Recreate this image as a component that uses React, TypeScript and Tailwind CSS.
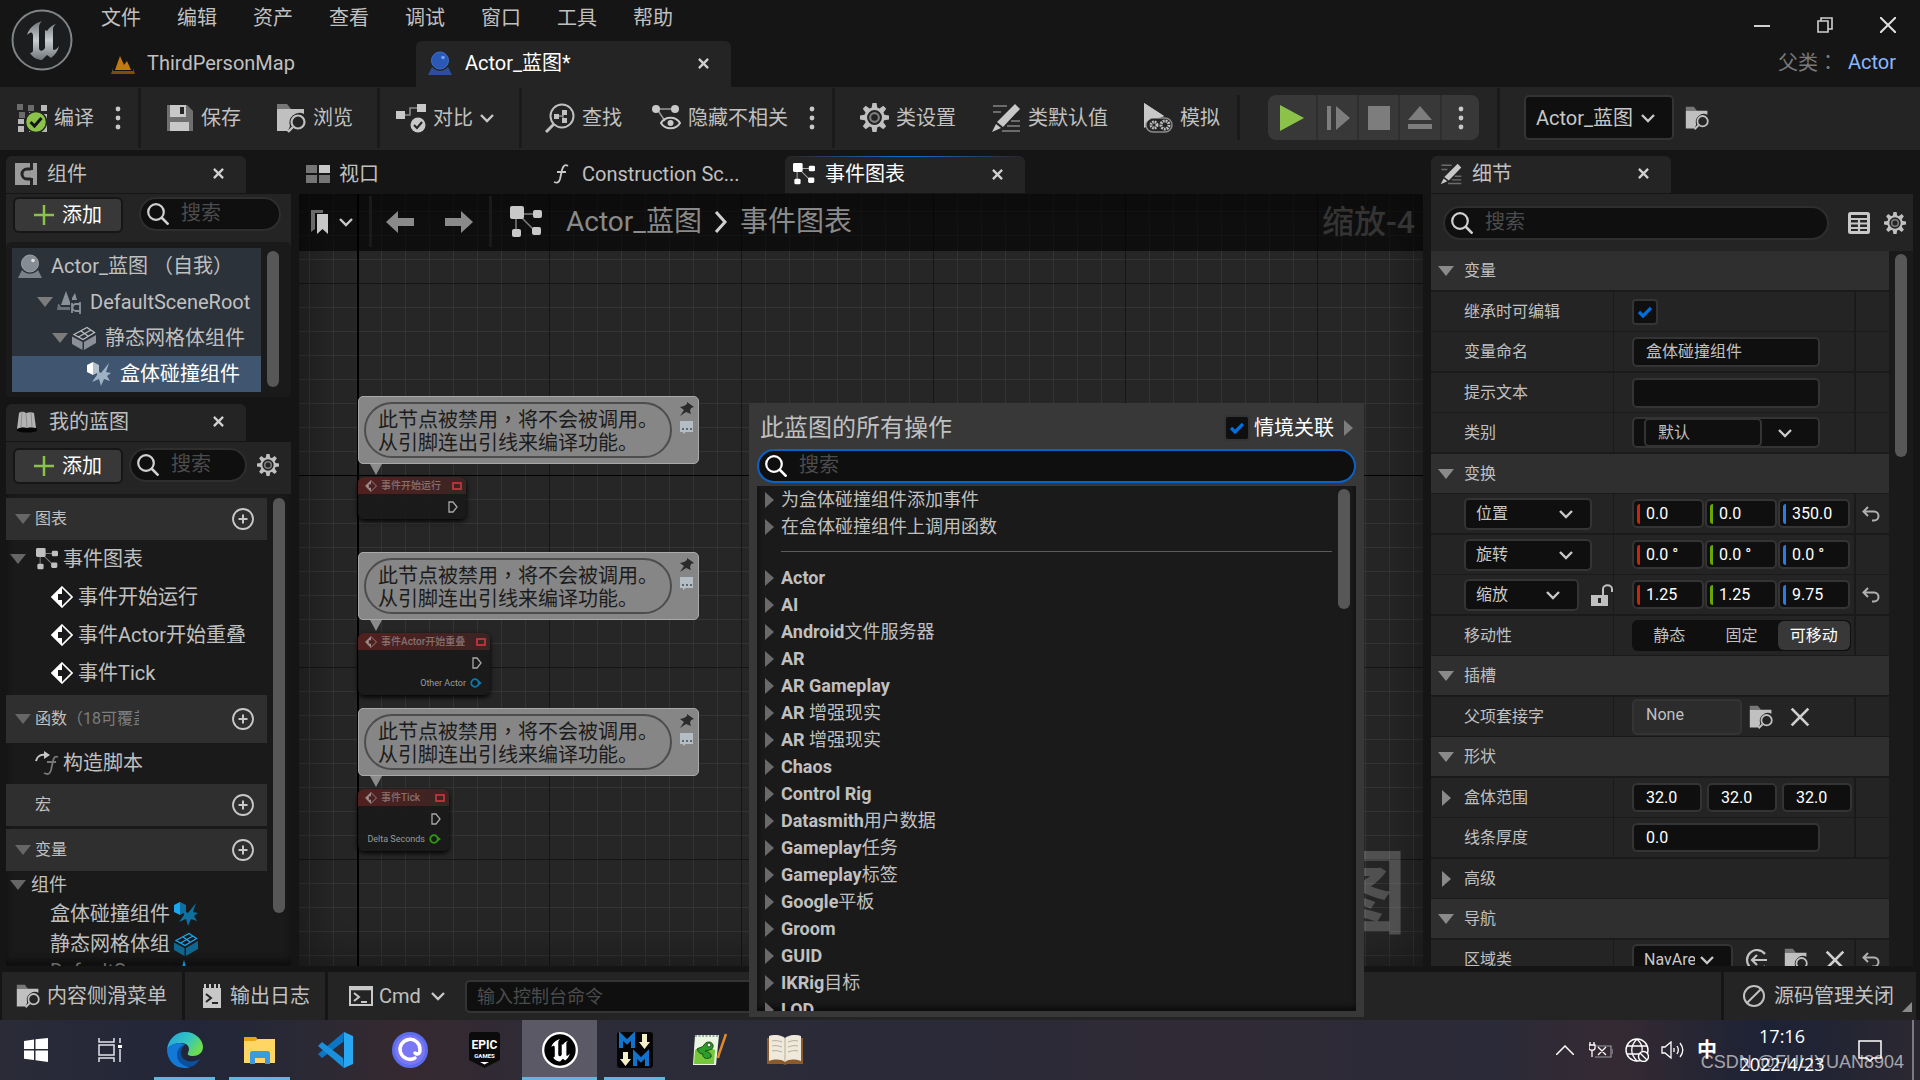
import { useState } from "react";
import type { ReactNode } from "react";
import { Ban } from "lucide-react";
import clsx from "clsx";

/* ---------- icons ---------- */

type IconProps = { className?: string };

const Svg = ({
  className = "size-6",
  box = "0 0 24 24",
  children,
}: {
  className?: string;
  box?: string;
  children: ReactNode;
}) => (
  <svg className={clsx("shrink-0", className)} viewBox={box} fill="none" aria-hidden="true">
    {children}
  </svg>
);

const Triangle = ({ open, className = "text-[#7c7c7c]" }: { open?: boolean; className?: string }) => (
  <Svg className={clsx("size-4", className)} box="0 0 16 16">
    <path d={open ? "M0 3h16L8 13z" : "M4 0v16l9-8z"} fill="currentColor" />
  </Svg>
);

const Chevron = ({ className }: IconProps) => (
  <Svg className={clsx("h-2.5 w-3.5", className)} box="0 0 14 10">
    <path d="m1 2 6 6 6-6" stroke="#c8c8c8" strokeWidth="2.4" />
  </Svg>
);

const Cross = ({ className = "size-[11px]", width = 2.5 }: { className?: string; width?: number }) => (
  <Svg className={className} box="0 0 12 12">
    <path d="m1 1 10 10M11 1 1 11" stroke="#d0d0d0" strokeWidth={width} />
  </Svg>
);

const SearchIcon = () => (
  <Svg className="size-[22px]" box="0 0 22 22">
    <circle cx="9" cy="9" r="7.800" stroke="currentColor" strokeWidth="2.200" />
    <path d="m14.500 14.500 7 7" stroke="currentColor" strokeWidth="2.600" />
  </Svg>
);

const Dots = () => (
  <Svg className="h-6 w-2" box="0 0 8 24">
    <circle cx="4" cy="3" r="2.4" fill="#c8c8c8" />
    <circle cx="4" cy="12" r="2.4" fill="#c8c8c8" />
    <circle cx="4" cy="21" r="2.4" fill="#c8c8c8" />
  </Svg>
);

const UnrealU = ({ fill }: { fill: string }) => (
  <path
    d="M31 12c-7 2-13 7-15 14 2-2 4-3 5-2s1 2 1 4v13c0 2-1 3-3 3 3 5 8 7 12 7l5-5 4 3c4-3 7-7 8-12-2 3-4 4-5 4-1 0-1-1-1-2V20c0-2 1-3 3-5-4 1-7 4-9 7l-2-1v18c-1 2-4 4-5 2-1 0-1-2-1-3V18c0-2 1-4 3-6z"
    fill={fill}
  />
);

const UnrealLogo = () => (
  <Svg className="size-[62px]" box="0 0 62 62">
    <defs>
      <linearGradient id="metal" x1="0" y1="0" x2="0" y2="1">
        <stop offset="0" stopColor="#6d7276" />
        <stop offset="0.5" stopColor="#c9cdd0" />
        <stop offset="1" stopColor="#6e7478" />
      </linearGradient>
    </defs>
    <circle cx="31" cy="31" r="29.5" fill="#1b1d1e" stroke="#7f8486" strokeWidth="2" />
    <UnrealU fill="url(#metal)" />
  </Svg>
);

const LevelIcon = () => (
  <Svg className="size-6">
    <path d="M4 19 9 5l4 9 3-4 4 9z" fill="#c47a0b" />
    <path d="M2 17 0 23h24l-2-6v3H2z" fill="#7c4d0b" />
  </Svg>
);

const ActorIcon = ({ blue }: { blue?: boolean }) => (
  <Svg className="size-6">
    <path d="M4 16 0 24h24l-4-8c-4 5-12 5-16 0z" fill={blue ? "#2b4f9b" : "#7b8188"} />
    <circle cx="12" cy="9.5" r="8.5" fill={blue ? "#2c58b5" : "#868c93"} stroke={blue ? "#3f6fd0" : "#9aa0a6"} />
    <circle cx="15" cy="6.5" r="1.8" fill={blue ? "#6ea3ff" : "#dfe2e5"} />
  </Svg>
);

const CompileIcon = () => (
  <Svg className="size-[30px]" box="0 0 30 30">
    <path d="M0 1h6v6H0zM11 2h6v6h-6zM2 9h6v6H2z" fill="#6c6c6c" />
    <path d="M24 2h6v6h-6zM1 16h6v5H1zM1 23h6v6H1zM12 9h5v5h-5zM24 11h6v18H12v-8z" fill="#b8b8b8" />
    <circle cx="19" cy="19" r="10.5" fill="#8bc34a" stroke="#242424" strokeWidth="1.5" />
    <path d="m13.500 19 4 4 7-8" stroke="#151515" strokeWidth="3" />
  </Svg>
);

const SaveIcon = () => (
  <Svg className="size-7" box="0 0 28 28">
    <path d="M1 1h20l6 6v20H1z" fill="#6f6f6f" />
    <path d="M4 1h16v12H4zM4 18h19v9H4z" fill="#c8c8c8" />
    <path d="M14 3h4v7h-4z" fill="#242424" />
  </Svg>
);

const BrowseIcon = ({ className = "size-[30px]" }: IconProps) => (
  <Svg className={className} box="0 0 30 30">
    <path d="M1 6V1h10l4 5z" fill="#777" />
    <path d="M1 6h27v5a10 10 0 0 0-14 12l-2 5H1z" fill="#c0c0c0" />
    <circle cx="22" cy="19" r="6.500" stroke="#c0c0c0" strokeWidth="2.200" />
    <path d="m17 24-5 5" stroke="#c0c0c0" strokeWidth="2.400" />
  </Svg>
);

const DiffIcon = () => (
  <Svg className="size-[30px]" box="0 0 30 30">
    <path d="M8 12h6V5h8" stroke="#8a8a8a" strokeWidth="1.600" />
    <path d="M0 8h9v8H0zM21 1h9v8h-9z" fill="#c8c8c8" />
    <circle cx="22" cy="22" r="7.500" fill="#c8c8c8" />
    <path d="m18 22 3 3 5-6" stroke="#242424" strokeWidth="2" />
  </Svg>
);

const FindIcon = () => (
  <Svg className="size-[30px]" box="0 0 30 30">
    <circle cx="17" cy="13" r="11.500" stroke="#c0c0c0" strokeWidth="2" />
    <path d="m9 21-8 8" stroke="#c0c0c0" strokeWidth="3" />
    <path d="M9 11h5v5H9zM17 7h5v5h-5zM17 15h5v5h-5z" fill="#c0c0c0" />
    <path d="M14 13h4V9M18 13v4" stroke="#c0c0c0" />
  </Svg>
);

const HideIcon = () => (
  <Svg className="size-[30px]" box="0 0 30 30">
    <path d="M5 6h19M6 6l8 12" stroke="#9a9a9a" strokeWidth="1.500" />
    <circle cx="5" cy="6" r="4" fill="#c8c8c8" />
    <circle cx="24" cy="6" r="4" fill="#c8c8c8" />
    <path d="M10 20c4-7 15-7 19 0-4 7-15 7-19 0z" stroke="#c8c8c8" strokeWidth="2" />
    <circle cx="19.500" cy="20" r="3" fill="#c8c8c8" />
  </Svg>
);

const GearIcon = ({ className = "size-[22px]" }: IconProps) => (
  <Svg className={className} box="0 0 28 28">
    <circle cx="14" cy="14" r="8.500" stroke="#c0c0c0" strokeWidth="2.600" />
    {[0, 45, 90, 135, 180, 225, 270, 315].map((a) => (
      <path key={a} d="M12 0h4l1 6h-6z" fill="#c0c0c0" transform={`rotate(${a} 14 14)`} />
    ))}
    <circle cx="14" cy="14" r="4.200" stroke="#7d7d7d" strokeWidth="2" />
  </Svg>
);

const PencilIcon = ({ className = "size-[30px]" }: IconProps) => (
  <Svg className={className} box="0 0 30 30">
    <path d="M2 3h14M2 9h8M20 18h9M16 23h13M11 28h18" stroke="#6c6c6c" strokeWidth="2" />
    <path d="m24 1 5 5L12 24l-6-5z" fill="#c8c8c8" />
    <path d="m5 21 5 4-9 4z" fill="#c8c8c8" />
  </Svg>
);

const SimulateIcon = () => (
  <Svg className="size-[30px]" box="0 0 30 30">
    <path d="m1 0 20 13L1 25z" fill="#c8c8c8" />
    <rect x="3" y="15" width="26" height="14" rx="7" fill="#242424" stroke="#8a8a8a" strokeWidth="1.500" />
    <path d="m1 0 20 13-6 2H8l-7 6z" fill="#c8c8c8" />
    <circle cx="11" cy="22" r="3" stroke="#c0c0c0" strokeWidth="3" strokeDasharray="1.600 0.800" />
    <circle cx="22" cy="22" r="4" stroke="#c0c0c0" strokeWidth="3" strokeDasharray="1.800 0.900" />
  </Svg>
);

const ComponentsIcon = () => (
  <Svg className="size-[22px]" box="0 0 22 22">
    <path d="M0 0h22v22H0z" fill="#9b9b9b" />
    <path d="M16 6h-4a5 5 0 0 0 0 10h4M16.500 0v7M16.500 15v7" stroke="#242424" strokeWidth="3" />
  </Svg>
);

const BookIcon = () => (
  <Svg className="size-6">
    <path d="M2 18h20v3c-6 2-14 2-20 0z" fill="#050505" />
    <path d="M4 3c3-2 5-1 7 0 3-1 6-1 8 0l2 15c-4-1-7-1-9 0-3-1-6-1-10 1z" fill="#b3b3b3" />
    <path d="m11 3 1 15M7 2 6 17M16 2l1 15" stroke="#8d8d8d" />
  </Svg>
);

const GraphIcon = ({ className = "size-[22px]" }: IconProps) => (
  <Svg className={className} box="0 0 32 32">
    <path d="M8 8h18M6 12v14M8 8l17 17" stroke="currentColor" strokeWidth="1.500" opacity="0.6" />
    <rect width="14" height="13" rx="2" fill="currentColor" />
    <rect x="23" y="4" width="9" height="8" rx="2" fill="currentColor" />
    <rect x="2" y="23" width="9" height="8" rx="2" fill="currentColor" />
    <rect x="22" y="21" width="9" height="8" rx="2" fill="currentColor" />
  </Svg>
);

const ViewportIcon = () => (
  <Svg className="h-[18px] w-6" box="0 0 24 18">
    <path d="M0 0h11v8H0zM0 10h11v8H0zM13 10h11v8H13z" fill="#757575" />
    <path d="M13 0h11v8H13z" fill="#c8c8c8" />
  </Svg>
);

const FnIcon = () => (
  <Svg className="h-5 w-4" box="0 0 16 20">
    <path d="M15 2c-3-2-5 0-6 4L7 15c-1 4-3 4-6 3M4 8h9" stroke="#c8c8c8" strokeWidth="1.800" />
  </Svg>
);

const SceneIcon = () => (
  <Svg className="size-6">
    <path d="m4 15 5-14 4 11v3zM15 8l3-5 2 7h-5z" fill="#8b9198" />
    <path d="M1 14 0 20h13v-3H4l-2-3z" fill="#6a7077" />
    <path d="M23 12v12M23 14h-4a3 3 0 0 0 0 7h4M15 13v10" stroke="#8b9198" strokeWidth="1.800" />
  </Svg>
);

const MeshIcon = ({ blue }: { blue?: boolean }) => (
  <Svg className="size-6">
    <path d="M0 10.500 10.500 16v8L0 18zM24 9l-12 7v8l12-7z" fill={blue ? "#0f668f" : "#8a9097"} />
    <path d="M2 8.500 15 1.500l7.500 5L11 13.500zM9 5l7 5M6.500 11 19 4" stroke={blue ? "#1ba7f0" : "#b9bdc2"} strokeWidth="1.300" />
  </Svg>
);

const CollisionIcon = ({ blue }: { blue?: boolean }) => (
  <Svg className="size-6">
    <path d="m10 9 4 2 8-10-3 9 5 1-4 3 3 5-6-2-3 7-2-7-7 3 5-7z" fill={blue ? "#0f6f9e" : "#9fb2c5"} />
    <path d="m0 3 6-3v13l-6-3z" fill={blue ? "#1ba7f0" : "#fff"} />
    <path d="m6 0 6 3v7l-6 3z" fill={blue ? "#0f6f9e" : "#b3c1cf"} />
  </Svg>
);

const EventIcon = ({ className = "size-[22px] text-white" }: IconProps) => (
  <Svg className={className} box="0 0 22 22">
    <path d="m11 1 10 10-10 10L1 11z" stroke="currentColor" strokeWidth="1.600" />
    <path d="M11 1v7H7v6h4v7L1 11z" fill="currentColor" />
  </Svg>
);

const ConstructIcon = () => (
  <Svg className="size-6">
    <path d="M1 10c1-5 5-7 10-6" stroke="#c8c8c8" strokeWidth="2" />
    <path d="m9 0 6 4-6 4z" fill="#c8c8c8" />
    <path d="M23 6c-3-1-4 0-5 4l-2 9c-1 4-3 5-7 3M12 11h9" stroke="#777" strokeWidth="1.800" />
  </Svg>
);

const AddCircle = () => (
  <Svg className="size-[22px]" box="0 0 22 22">
    <circle cx="11" cy="11" r="10" stroke="#c8c8c8" strokeWidth="1.800" />
    <path d="M11 6.500v9M6.500 11h9" stroke="#c8c8c8" strokeWidth="2" />
  </Svg>
);

const BookmarkIcon = () => (
  <Svg className="h-6 w-[18px]" box="0 0 18 24">
    <path d="M0 0h12v3H4v16l-4 3z" fill="#6a6a6a" />
    <path d="M6 4h11v20l-5.500-5L6 24z" fill="#c8c8c8" />
  </Svg>
);

const ArrowIcon = ({ className }: IconProps) => (
  <Svg className={clsx("h-[22px] w-7", className)} box="0 0 28 22">
    <path d="M0 11 12 0v7h16v8H12v7z" fill="#8a8a8a" />
  </Svg>
);

const LockIcon = () => (
  <Svg className="size-[22px]" box="0 0 22 22">
    <path d="M0 11h17v11H0z" fill="#c0c0c0" />
    <path d="M12 11V5c0-5 9-5 9 0v3" stroke="#c0c0c0" strokeWidth="2" />
    <path d="M7 14h3v5H7z" fill="#242424" />
  </Svg>
);

const ResetIcon = () => (
  <Svg className="h-4 w-[18px]" box="0 0 18 16">
    <path d="M6 1 1.500 5.500 6 10M2 5.500h10c6 0 6 9 0 9h-2" stroke="#b0b0b0" strokeWidth="2" />
  </Svg>
);

const TableIcon = () => (
  <Svg className="size-[22px]" box="0 0 22 22">
    <rect x="1.500" y="1.500" width="19" height="19" rx="1" stroke="#c8c8c8" strokeWidth="3" />
    <path d="M1 7h20M1 11.500h20M1 16h20M11 7v14" stroke="#c8c8c8" strokeWidth="2.200" />
  </Svg>
);

const UseIcon = () => (
  <Svg className="size-[22px]" box="0 0 22 22">
    <path d="M20 5a10 10 0 1 0 0 12" stroke="#c0c0c0" strokeWidth="2.200" />
    <path d="M22 11H7M12 6l-5 5 5 5" stroke="#c0c0c0" strokeWidth="2.200" />
  </Svg>
);

const LogIcon = () => (
  <Svg className="h-6 w-[18px]" box="0 0 18 24">
    <path d="M0 4h18v20H0zM1 0h2v5H1zM6 0h2v5H6zM11 0h2v5h-2zM15 0h2v5h-2z" fill="#c8c8c8" />
    <path d="m3 10 5 4-5 4M9 19h6" stroke="#242424" strokeWidth="2" />
  </Svg>
);

const TerminalIcon = () => (
  <Svg className="h-5 w-6" box="0 0 24 20">
    <rect x="1" y="1" width="22" height="18" stroke="#c8c8c8" strokeWidth="2" />
    <path d="M1 3h22" stroke="#c8c8c8" strokeWidth="2.500" />
    <path d="m5 7 5 4-5 4M12 16h6" stroke="#c8c8c8" strokeWidth="2" />
  </Svg>
);

/* ---------- small controls ---------- */

const field = "rounded-[5px] border-2 border-[#343434]";

function CloseButton({ label }: { label: string }) {
  return (
    <button aria-label={`关闭${label}`}>
      <Cross />
    </button>
  );
}

function SearchBox({ label, focused, className }: { label: string; focused?: boolean; className?: string }) {
  return (
    <label
      className={clsx(
        "flex h-[34px] min-w-0 items-center rounded-full border-2 bg-[#0f0f0f] pl-1.5",
        focused ? "border-[#0a62c4] text-white" : "border-[#2e2e2e] text-[#d0d0d0]",
        className
      )}
    >
      <SearchIcon />
      <input
        aria-label={label}
        placeholder="搜索"
        className="w-full min-w-0 bg-transparent pb-0.5 pl-3 text-xl/6 outline-none placeholder:text-[#4c4c4c]"
      />
    </label>
  );
}

function AddButton() {
  return (
    <button className="flex h-9 w-[110px] shrink-0 items-center justify-center gap-2 rounded-md border-2 border-[#161616] bg-[#383838] text-xl/6 text-white">
      <Svg className="size-5" box="0 0 20 20">
        <path d="M10 0v20M0 10h20" stroke="#8bc34a" strokeWidth="2.500" />
      </Svg>
      添加
    </button>
  );
}

function Checkbox({ id }: { id: string }) {
  const [checked, setChecked] = useState(true);
  return (
    <span className="relative flex size-[26px] shrink-0">
      <input
        id={id}
        type="checkbox"
        checked={checked}
        onChange={() => setChecked(!checked)}
        className="size-full appearance-none rounded border-2 border-[#343434] bg-[#0f0f0f]"
      />
      {checked && (
        <Svg className="pointer-events-none absolute inset-1.5 size-3.5" box="0 0 14 14">
          <path d="m1 7 4 4 8-8" stroke="#0070e0" strokeWidth="3.200" />
        </Svg>
      )}
    </span>
  );
}

function Dropdown({ label, value, className }: { label: string; value: string; className?: string }) {
  return (
    <span className={clsx("relative flex", className)}>
      <select
        aria-label={label}
        className={clsx(
          field,
          "size-full appearance-none overflow-hidden bg-[#0f0f0f] pr-9 pl-2.5 text-clip whitespace-nowrap text-[#c8c8c8] outline-none"
        )}
      >
        <option>{value}</option>
      </select>
      <Chevron className="pointer-events-none absolute inset-y-0 right-[19px] my-auto" />
    </span>
  );
}

function PanelTab({ icon, title }: { icon: ReactNode; title: string }) {
  return (
    <div className="flex h-[37px] w-60 items-center gap-2.5 rounded-t-md bg-[#242424] pr-[22px] pb-0.5 pl-[9px]">
      {icon}
      <h2 className="flex-1 text-xl/6">{title}</h2>
      <CloseButton label={title} />
    </div>
  );
}

/* ---------- title bar & toolbar ---------- */

const menus = ["文件", "编辑", "资产", "查看", "调试", "窗口", "工具", "帮助"];

function TitleBar() {
  return (
    <header className="flex h-[87px] shrink-0">
      <div className="pt-[9px] pl-[11px]">
        <UnrealLogo />
      </div>
      <div className="ml-7 flex flex-1 flex-col">
        <nav className="flex h-[41px] gap-9 pt-1.5 text-xl/6">
          {menus.map((m) => (
            <button key={m} className="h-6">
              {m}
            </button>
          ))}
        </nav>
        <div className="flex h-[46px] text-xl/6">
          <button className="flex w-[315px] items-center gap-3 pb-0.5 pl-2.5">
            <LevelIcon />
            ThirdPersonMap
          </button>
          <div className="flex w-[315px] items-center gap-[13px] rounded-t-md bg-[#242424] pr-[22px] pb-0.5 pl-3 text-white">
            <ActorIcon blue />
            <span className="flex-1">Actor_蓝图*</span>
            <CloseButton label="Actor_蓝图" />
          </div>
        </div>
      </div>
      <div className="flex flex-col items-end justify-between pr-6 pb-3">
        <div className="flex gap-[47px] pt-[17px]">
          <button aria-label="最小化">
            <Svg className="size-4" box="0 0 16 16">
              <path d="M0 9h16" stroke="#d0d0d0" strokeWidth="2" />
            </Svg>
          </button>
          <button aria-label="还原">
            <Svg className="size-4" box="0 0 16 16">
              <path d="M1 4h10v11H1zM4 4V1h11v11h-4" stroke="#d0d0d0" strokeWidth="1.600" />
            </Svg>
          </button>
          <button aria-label="关闭">
            <Svg className="size-4" box="0 0 16 16">
              <path d="m0 0 16 16M16 0 0 16" stroke="#e0e0e0" strokeWidth="2" />
            </Svg>
          </button>
        </div>
        <p className="flex gap-2.5 text-xl/6 text-[#7a7a7a]">
          <span>
            父类<span className="font-['Noto_Sans_CJK_TC']">：</span>
          </span>
          <a href="#actor" className="text-[#8ab8ff]">
            Actor
          </a>
        </p>
      </div>
    </header>
  );
}

function Tool({ icon, label, className }: { icon: ReactNode; label: string; className?: string }) {
  return (
    <button className={clsx("flex items-center gap-[7px] whitespace-nowrap", className)}>
      {icon}
      {label}
    </button>
  );
}

const Divider = ({ className = "h-[60px]" }: IconProps) => (
  <span className={clsx("w-[3px] shrink-0 bg-[#1a1a1a]", className)} />
);

function Toolbar() {
  return (
    <div className="flex h-[63px] shrink-0 items-center bg-[#242424] pb-0.5 text-xl/6">
      <div className="flex w-[138px] items-center gap-5 pl-[17px]">
        <Tool icon={<CompileIcon />} label="编译" />
        <button aria-label="编译选项">
          <Dots />
        </button>
      </div>
      <Divider />
      <div className="flex w-[236px] items-center gap-[35px] pl-[25px]">
        <Tool icon={<SaveIcon />} label="保存" />
        <Tool icon={<BrowseIcon />} label="浏览" />
      </div>
      <Divider />
      <div className="flex w-[139px] items-center pl-4">
        <Tool icon={<DiffIcon />} label="对比" />
        <Chevron className="ml-[7px]" />
      </div>
      <Divider />
      <div className="flex w-[310px] items-center gap-[29px] pl-[23px]">
        <Tool icon={<FindIcon />} label="查找" />
        <div className="flex items-center gap-5">
          <Tool icon={<HideIcon />} label="隐藏不相关" />
          <button aria-label="隐藏选项">
            <Dots />
          </button>
        </div>
      </div>
      <Divider />
      <div className="flex w-[402px] items-center gap-[35px] pl-[25px]">
        <Tool icon={<GearIcon className="size-[29px]" />} label="类设置" />
        <Tool icon={<PencilIcon />} label="类默认值" />
        <Tool icon={<SimulateIcon />} label="模拟" />
      </div>
      <Divider className="h-[45px]" />
      <div className="ml-7 flex h-[45px] divide-x-2 divide-[#2e2e2e] overflow-hidden rounded-lg bg-[#383838]">
        <button aria-label="播放" className="flex w-[50px] items-center justify-center">
          <Svg className="h-[26px] w-6" box="0 0 24 26">
            <path d="m0 0 24 13L0 26z" fill="#8bc34a" />
          </Svg>
        </button>
        <button aria-label="逐帧" className="flex w-[41px] items-center justify-center">
          <Svg className="size-6">
            <path d="M1 0h4v24H1zM10 0l14 12-14 12z" fill="#7d7d7d" />
          </Svg>
        </button>
        <button aria-label="停止" className="flex w-[41px] items-center justify-center">
          <Svg className="size-6">
            <path d="M1 0h22v24H1z" fill="#7d7d7d" />
          </Svg>
        </button>
        <button aria-label="弹出" className="flex w-[42px] items-center justify-center">
          <Svg className="size-6">
            <path d="m12 0 12 14H0zM0 18h24v5H0z" fill="#7d7d7d" />
          </Svg>
        </button>
        <button aria-label="播放选项" className="flex w-[37px] items-center justify-center">
          <Dots />
        </button>
      </div>
      <Divider className="ml-[18px] h-[60px]" />
      <Dropdown label="调试对象" value="Actor_蓝图" className="ml-6 h-[45px] w-[150px]" />
      <button aria-label="浏览对象" className="ml-[11px]">
        <BrowseIcon className="size-6" />
      </button>
    </div>
  );
}

/* ---------- left column ---------- */

function ComponentsPanel() {
  return (
    <section>
      <PanelTab icon={<ComponentsIcon />} title="组件" />
      <div className="mt-px rounded-b-md bg-[#242424]">
        <div className="flex h-12 items-start gap-4 pt-[3px] pr-2.5 pl-[7px]">
          <AddButton />
          <SearchBox label="搜索组件" className="flex-1" />
        </div>
        <div className="flex h-[155px] rounded-md bg-[#1a1a1a] py-1.5 pl-1.5">
          <ul className="h-36 flex-1 overflow-hidden bg-[#2b323a] text-xl/9 whitespace-nowrap">
            <li className="flex items-center gap-[9px] pl-1.5">
              <ActorIcon />
              Actor_蓝图 （自我）
            </li>
            <li className="flex items-center pl-[25px]">
              <Triangle open />
              <span className="ml-1 flex items-center gap-[9px]">
                <SceneIcon />
                DefaultSceneRoot
              </span>
            </li>
            <li className="flex items-center pl-10">
              <Triangle open />
              <span className="ml-1 flex items-center gap-[9px]">
                <MeshIcon />
                静态网格体组件
              </span>
            </li>
            <li className="flex items-center gap-[9px] bg-[#405670] pl-[75px] text-white">
              <CollisionIcon />
              盒体碰撞组件
            </li>
          </ul>
          <div className="mt-[3px] mr-3 ml-1.5 h-[136px] w-3 rounded-full bg-[#575757]" />
        </div>
      </div>
    </section>
  );
}

function ListHeader({
  title,
  note,
  open = true,
  className = "h-[42px]",
}: {
  title: string;
  note?: string;
  open?: boolean;
  className?: string;
}) {
  return (
    <div className={clsx("flex shrink-0 items-center bg-[#2f2f2f] pr-[13px] pl-[9px] text-base/6", className)}>
      <span className={clsx("mr-1", !open && "invisible")}>
        <Triangle open className="text-[#666]" />
      </span>
      {title}
      {note && <span className="w-[72px] overflow-hidden whitespace-nowrap text-[#7d7d7d]">{note}</span>}
      <button aria-label={`添加${title}`} className="ml-auto">
        <AddCircle />
      </button>
    </div>
  );
}

function BlueprintPanel() {
  return (
    <section className="mt-[7px] flex min-h-0 flex-1 flex-col">
      <PanelTab icon={<BookIcon />} title="我的蓝图" />
      <div className="mt-px flex h-[52px] shrink-0 items-start bg-[#242424] pt-1.5 pl-[7px]">
        <AddButton />
        <SearchBox label="搜索蓝图" className="ml-1.5 w-[118px]" />
        <button aria-label="视图选项" className="mt-1.5 ml-2.5">
          <GearIcon />
        </button>
      </div>
      <div className="flex min-h-0 flex-1 bg-[#1a1a1a] pt-1 shadow-[inset_0_-6px_6px_#0f0f0f]">
        <div className="flex min-w-0 flex-1 flex-col overflow-hidden text-xl/6">
          <ListHeader title="图表" />
          <div className="flex h-[38px] shrink-0 items-center pl-1">
            <Triangle open className="text-[#666]" />
            <span className="ml-2.5 flex items-center gap-[5px]">
              <GraphIcon />
              事件图表
            </span>
          </div>
          {["事件开始运行", "事件Actor开始重叠", "事件Tick"].map((e) => (
            <div key={e} className="flex h-[38px] shrink-0 items-center gap-[5px] pl-[45px] whitespace-nowrap">
              <EventIcon />
              {e}
            </div>
          ))}
          <ListHeader title="函数" note="（18可覆盖）" className="mt-[3px] h-12" />
          <div className="flex h-[41px] shrink-0 items-center gap-1 pb-0.5 pl-[29px]">
            <ConstructIcon />
            构造脚本
          </div>
          <ListHeader title="宏" open={false} />
          <ListHeader title="变量" className="mt-[3px] h-[42px]" />
          <div className="flex h-7 shrink-0 items-center gap-[5px] pl-1 text-lg/6">
            <Triangle open className="text-[#666]" />
            组件
          </div>
          <div className="flex h-[30px] shrink-0 items-center gap-1 pl-11">
            盒体碰撞组件
            <CollisionIcon blue />
          </div>
          <div className="flex h-[30px] shrink-0 items-center gap-1 pl-11">
            <span className="w-[120px] overflow-hidden whitespace-nowrap">静态网格体组</span>
            <MeshIcon blue />
          </div>
          <div className="flex h-6 shrink-0 items-center gap-1 pl-11 text-[#6a6a6a]">
            <span className="w-[120px] overflow-hidden">DefaultSceneRoot</span>
            <Svg className="size-6">
              <path d="M10 1 6 15h8z" fill="#0f8fce" />
            </Svg>
          </div>
        </div>
        <div className="mr-1.5 ml-1.5 h-[415px] w-3 rounded-full bg-[#575757]" />
      </div>
    </section>
  );
}

/* ---------- event graph ---------- */

type GraphNode = { title: string; y: number; width: number; pin?: string; color?: string };

const nodes: GraphNode[] = [
  { title: "事件开始运行", y: 202, width: 108 },
  { title: "事件Actor开始重叠", y: 358, width: 132, pin: "Other Actor", color: "#0b78ad" },
  { title: "事件Tick", y: 514, width: 91, pin: "Delta Seconds", color: "#2f9a10" },
];

function NodeView({ node }: { node: GraphNode }) {
  return (
    <div className="absolute left-[59px]" style={{ top: node.y }}>
      <div className="flex h-[68px] w-[341px] justify-between rounded-[5px] border border-[#a9a9a9] bg-[#8b8b8b]/95 py-[5px] pr-1 pl-[5px] text-[#1c1c1c]">
        <p className="h-14 w-[308px] rounded-full border-2 border-[#4d4d4d] pt-[3px] pl-3 text-xl/[23px] whitespace-nowrap">
          此节点被禁用<span className="font-['Noto_Sans_CJK_TC']">，</span>将不会被调用。
          <br />
          从引脚连出引线来编译功能。
        </p>
        <div className="flex flex-col gap-1">
          <Svg className="size-[15px]" box="0 0 15 15">
            <path d="m8 0 7 5-3 1-1 3 1 3-5-2-6 4 4-6-4-3 4-1 3-2z" fill="#2b2b2b" />
          </Svg>
          <Svg className="h-3.5 w-[15px]" box="0 0 15 14">
            <path d="M1 0h13v11H7l-3 2v-2H1z" fill="#b4bdc4" />
            <path d="M3 7h2v2H3zM7 7h2v2H7zM11 7h2v2h-2z" fill="#5e686f" />
          </Svg>
        </div>
      </div>
      <Svg className="ml-3 h-[11px] w-3" box="0 0 12 11">
        <path d="M0 0h12L6 11z" fill="#8b8b8b" />
      </Svg>
      <div
        className="mt-0.5 overflow-hidden rounded-md bg-[#181918]/90 shadow-[0_2px_5px_#000]"
        style={{ width: node.width }}
      >
        <div className="flex h-[17px] items-center gap-1 bg-linear-to-r from-[#51201f] to-[#3a2423] pr-1 pl-[7px] text-[10px]/4 font-medium whitespace-nowrap text-[#86706f]">
          <EventIcon className="size-3 text-[#a18f8e]" />
          {node.title}
          <Svg className="ml-auto h-2 w-2.5" box="0 0 10 8">
            <rect x="1" y="1" width="8" height="6" stroke="#c0363c" strokeWidth="1.800" />
          </Svg>
        </div>
        <div className="flex h-[25px] items-center justify-end pr-2">
          <Svg className="h-3 w-2.5" box="0 0 10 12">
            <path d="M1 1h4l4 5-4 5H1z" stroke="#a8a8a8" strokeWidth="1.300" />
          </Svg>
        </div>
        {node.pin && (
          <div className="flex h-5 items-start justify-end gap-1 pr-2 text-[9px]/4 whitespace-nowrap text-[#9a9a9a]">
            {node.pin}
            <Svg className="mt-[3px] h-2.5 w-3" box="0 0 12 10">
              <circle cx="5" cy="5" r="3.800" stroke={node.color} strokeWidth="1.800" />
              <path d="m9 3 3 2-3 2z" fill={node.color} />
            </Svg>
          </div>
        )}
      </div>
    </div>
  );
}

function GraphEditor() {
  return (
    <main className="mx-2 flex min-w-0 flex-1 flex-col pt-1.5">
      <div className="flex h-[38px] text-xl/6" role="tablist">
        <button role="tab" className="flex h-[37px] w-[246px] items-center gap-[9px] pb-0.5 pl-[7px]">
          <ViewportIcon />
          视口
        </button>
        <button role="tab" className="flex h-[37px] w-60 items-center gap-[13px] pb-0.5 pl-2">
          <FnIcon />
          Construction Sc...
        </button>
        <div className="h-[37px] w-60 rounded-t-md bg-linear-to-r from-[#242424] via-[#0070e0] to-[#242424] pt-px">
          <div
            role="tab"
            aria-selected="true"
            className="flex h-9 items-center gap-2.5 rounded-t-md bg-[#242424] pr-[22px] pb-0.5 pl-2 text-white"
          >
            <GraphIcon />
            <span className="flex-1">事件图表</span>
            <CloseButton label="事件图表" />
          </div>
        </div>
      </div>
      <div className="relative min-h-0 flex-1 overflow-hidden bg-[#262626] [background-image:linear-gradient(90deg,#000_2px,transparent_2px),linear-gradient(#000_1px,transparent_1px),linear-gradient(90deg,#151515_1px,transparent_1px),linear-gradient(#151515_1px,transparent_1px),linear-gradient(90deg,#343434_1px,transparent_1px),linear-gradient(#343434_1px,transparent_1px)] [background-position:58px_0,0_281px,58px_0,0_89px,10px_0,0_17px] [background-repeat:no-repeat,no-repeat,repeat,repeat,repeat,repeat] [background-size:auto,auto,192px_192px,192px_192px,24px_24px,24px_24px]">
        <div className="pointer-events-none absolute inset-0 shadow-[inset_0_0_50px_rgba(0,0,0,0.45)]" />
        <p className="absolute right-4 bottom-4 text-[92px]/[110px] font-bold whitespace-nowrap text-white/20">蓝图</p>
        {nodes.map((n) => (
          <NodeView key={n.title} node={n} />
        ))}
        <div className="relative flex h-[57px] items-center bg-black/60 pr-2 pb-0.5 pl-3">
          <button aria-label="书签" className="flex items-center gap-2.5">
            <BookmarkIcon />
            <Chevron />
          </button>
          <Divider className="ml-4 h-[51px]" />
          <button aria-label="后退" className="ml-3.5">
            <ArrowIcon />
          </button>
          <button aria-label="前进" className="ml-[31px]">
            <ArrowIcon className="rotate-180" />
          </button>
          <Divider className="ml-4 h-[51px]" />
          <div className="ml-[18px] flex items-center text-[28px]/9 text-[#8a8a8a]">
            <span className="text-[#c8c8c8]">
              <GraphIcon className="size-8" />
            </span>
            <span className="ml-6">Actor_蓝图</span>
            <Svg className="mx-3 h-6 w-3.5" box="0 0 14 24">
              <path d="m2 2 9 10-9 10" stroke="#d0d0d0" strokeWidth="3" />
            </Svg>
            <span>事件图表</span>
          </div>
          <span className="ml-auto text-[32px]/9 font-medium text-[#343434]">缩放-4</span>
        </div>
      </div>
    </main>
  );
}

/* ---------- details ---------- */

function Section({ title, open = true, plain }: { title: string; open?: boolean; plain?: boolean }) {
  return (
    <div
      className={clsx(
        "flex h-[39px] shrink-0 items-center gap-2.5 pl-[7px] odd:mb-0.5 even:mb-px",
        plain ? "bg-[#242424]" : "bg-[#2f2f2f]"
      )}
    >
      <Triangle open={open} className="text-[#8a8a8a]" />
      {title}
    </div>
  );
}

function Row({
  label,
  name,
  expand,
  reset,
  children,
}: {
  label?: string;
  name?: ReactNode;
  expand?: boolean;
  reset?: boolean;
  children: ReactNode;
}) {
  return (
    <div className="flex h-[39px] shrink-0 odd:mb-0.5 even:mb-px">
      <div className="mr-px flex w-[182px] items-center bg-[#242424] pl-[7px]">
        {expand ? (
          <Triangle className="mr-2.5 text-[#8a8a8a]" />
        ) : (
          <span className="w-[26px] shrink-0" />
        )}
        {label}
        {name}
      </div>
      <div className="mr-0.5 flex flex-1 items-center bg-[#242424] pl-[18px]">{children}</div>
      <div className="flex w-[33px] items-center justify-center bg-[#242424] pr-1">
        {reset && (
          <button aria-label="重置为默认值">
            <ResetIcon />
          </button>
        )}
      </div>
    </div>
  );
}

function TextField({
  label,
  value,
  className = "h-[30px] w-[188px] bg-[#0f0f0f]",
}: {
  label: string;
  value: string;
  className?: string;
}) {
  return (
    <input
      aria-label={label}
      defaultValue={value}
      className={clsx(field, "min-w-0 px-3 text-base/5 outline-none", className)}
    />
  );
}

const axes = ["bg-[#c8260b]", "bg-[#68a800]", "bg-[#2c7ae8]"];

function Vector({ label, values }: { label: string; values: string[] }) {
  return (
    <div className="flex gap-px">
      {values.map((v, i) => (
        <label key={i} className={clsx(field, "flex h-[29px] w-[72px] items-center gap-1.5 bg-[#0f0f0f] pl-[3px]")}>
          <span className={clsx("h-5 w-[3px] shrink-0 rounded-l-sm", axes[i])} />
          <input
            aria-label={`${label} ${"XYZ"[i]}`}
            defaultValue={v}
            className="w-full min-w-0 bg-transparent text-white outline-none"
          />
        </label>
      ))}
    </div>
  );
}

function DetailsPanel() {
  const [mobility, setMobility] = useState("可移动");

  return (
    <aside className="mr-[7px] flex w-[482px] shrink-0 flex-col pt-1.5">
      <PanelTab icon={<PencilIcon className="size-[22px]" />} title="细节" />
      <div className="mt-px flex h-[57px] shrink-0 items-center bg-[#242424] pr-[7px] pl-3">
        <SearchBox label="搜索细节" className="flex-1" />
        <button aria-label="属性矩阵" className="ml-[19px]">
          <TableIcon />
        </button>
        <button aria-label="细节设置" className="ml-3.5">
          <GearIcon />
        </button>
      </div>
      <div className="flex min-h-0 flex-1 bg-[#1a1a1a] text-base/6">
        <div className="flex flex-1 flex-col overflow-hidden">
          <Section title="变量" />
          <Row name={<label htmlFor="inherit">继承时可编辑</label>}>
            <Checkbox id="inherit" />
          </Row>
          <Row label="变量命名">
            <TextField label="变量命名" value="盒体碰撞组件" className="h-[30px] w-[188px] bg-[#0f0f0f] pb-1" />
          </Row>
          <Row label="提示文本">
            <TextField label="提示文本" value="" />
          </Row>
          <Row label="类别">
            <div className={clsx(field, "flex h-[31px] w-[188px] items-center bg-[#0f0f0f] pl-2.5")}>
              <TextField label="类别" value="默认" className="h-[29px] w-[118px] bg-[#0f0f0f] pb-1" />
              <button aria-label="选择类别" className="ml-4">
                <Chevron />
              </button>
            </div>
          </Row>
          <Section title="变换" />
          <Row name={<Dropdown label="位置类型" value="位置" className="h-8 w-32" />} reset>
            <Vector label="位置" values={["0.0", "0.0", "350.0"]} />
          </Row>
          <Row name={<Dropdown label="旋转类型" value="旋转" className="h-8 w-32" />}>
            <Vector label="旋转" values={["0.0 °", "0.0 °", "0.0 °"]} />
          </Row>
          <Row
            name={
              <>
                <Dropdown label="缩放类型" value="缩放" className="h-8 w-[115px]" />
                <button aria-label="锁定比例" className="ml-3">
                  <LockIcon />
                </button>
              </>
            }
            reset
          >
            <Vector label="缩放" values={["1.25", "1.25", "9.75"]} />
          </Row>
          <Row label="移动性">
            <div className="flex h-[31px] w-[219px] rounded-md bg-[#0f0f0f] p-px" role="group" aria-label="移动性">
              {["静态", "固定", "可移动"].map((m) => (
                <button
                  key={m}
                  onClick={() => setMobility(m)}
                  className={clsx("flex-1 rounded-md", mobility === m && "bg-[#383838] text-white")}
                >
                  {m}
                </button>
              ))}
            </div>
          </Row>
          <Section title="插槽" />
          <Row label="父项套接字">
            <TextField label="父项套接字" value="None" className="h-9 w-[110px] bg-[#2c2c2c] pb-1" />
            <button aria-label="浏览插槽" className="ml-[7px]">
              <BrowseIcon className="size-6" />
            </button>
            <button aria-label="清除插槽" className="ml-[17px]">
              <Cross className="size-5" width={1.6} />
            </button>
          </Row>
          <Section title="形状" />
          <Row label="盒体范围" expand>
            <div className="flex gap-[5px] text-white">
              {["X", "Y", "Z"].map((axis) => (
                <TextField key={axis} label={`盒体范围 ${axis}`} value="32.0" className="h-[29px] w-[70px] bg-[#0f0f0f]" />
              ))}
            </div>
          </Row>
          <Row label="线条厚度">
            <TextField label="线条厚度" value="0.0" className="h-[29px] w-[188px] bg-[#0f0f0f] text-white" />
          </Row>
          <Section title="高级" open={false} plain />
          <Section title="导航" />
          <Row label="区域类" reset>
            <Dropdown label="区域类" value="NavArea_Obstacle" className="h-8 w-[101px]" />
            <button aria-label="使用所选" className="ml-3">
              <UseIcon />
            </button>
            <button aria-label="浏览区域类" className="ml-[17px]">
              <BrowseIcon className="size-6" />
            </button>
            <button aria-label="清除区域类" className="ml-[17px]">
              <Cross className="size-5" width={1.6} />
            </button>
          </Row>
        </div>
        <div className="mx-1.5 mt-[3px] h-[203px] w-3 rounded-full bg-[#575757]" />
      </div>
    </aside>
  );
}

/* ---------- action menu ---------- */

// latin part is set bold, the translated part stays regular
const categories: [string, string?][] = [
  ["Actor"],
  ["AI"],
  ["Android", "文件服务器"],
  ["AR"],
  ["AR Gameplay"],
  ["AR ", "增强现实"],
  ["AR ", "增强现实"],
  ["Chaos"],
  ["Control Rig"],
  ["Datasmith", "用户数据"],
  ["Gameplay", "任务"],
  ["Gameplay", "标签"],
  ["Google", "平板"],
  ["Groom"],
  ["GUID"],
  ["IKRig", "目标"],
  ["LOD"],
];

function ActionRow({ children }: { children: ReactNode }) {
  return (
    <li>
      <button className="flex h-[27px] items-center gap-1 pl-1">
        <Triangle className="text-[#6a6a6a]" />
        <span className="whitespace-pre">{children}</span>
      </button>
    </li>
  );
}

function ActionMenu() {
  return (
    <div className="absolute top-[403px] left-[749px] flex h-[614px] w-[615px] flex-col bg-[#383838] px-2 pb-1.5">
      <div className="flex h-[46px] items-center pt-1 pl-[3px]">
        <h2 className="flex-1 text-2xl/8">此蓝图的所有操作</h2>
        <Checkbox id="context" />
        <label htmlFor="context" className="mr-1.5 ml-1 text-xl/6 text-white">
          情境关联
        </label>
        <Triangle className="text-[#7c7c7c]" />
      </div>
      <SearchBox label="搜索操作" focused className="shrink-0" />
      <div className="mt-[3px] flex min-h-0 flex-1 bg-[#1a1a1a] shadow-[inset_0_-4px_5px_#0c0c0c]">
        <ul className="flex-1 overflow-hidden text-lg/6">
          <ActionRow>为盒体碰撞组件添加事件</ActionRow>
          <ActionRow>在盒体碰撞组件上调用函数</ActionRow>
          <li className="mt-[11px] mr-1.5 mb-3 ml-6 h-px bg-[#5a5a5a]" />
          {categories.map(([latin, rest], i) => (
            <ActionRow key={i}>
              <b>{latin}</b>
              {rest}
            </ActionRow>
          ))}
        </ul>
        <div className="mt-[3px] mr-1.5 h-[120px] w-3 rounded-full bg-[#575757]" />
      </div>
    </div>
  );
}

/* ---------- status bar & taskbar ---------- */

function StatusBar() {
  return (
    <footer className="mr-1 ml-0.5 mt-1.5 flex h-12 shrink-0 gap-[3px] text-xl/6">
      <button className="flex w-[180px] items-center gap-[7px] bg-[#242424] pl-3.5">
        <BrowseIcon className="size-6" />
        内容侧滑菜单
      </button>
      <button className="flex w-[140px] items-center gap-[9px] bg-[#242424] pl-[18px]">
        <LogIcon />
        输出日志
      </button>
      <div className="flex flex-1 items-center bg-[#242424] pl-[21px]">
        <TerminalIcon />
        <span className="relative ml-1 flex items-center">
          <select aria-label="控制台类型" className="w-[76px] appearance-none bg-transparent pl-0.5 outline-none">
            <option>Cmd</option>
          </select>
          <Chevron className="pointer-events-none absolute right-2" />
        </span>
        <input
          aria-label="控制台命令"
          placeholder="输入控制台命令"
          className={clsx(
            field,
            "ml-3 h-[33px] w-[440px] bg-[#0f0f0f] px-2.5 text-lg/6 outline-none placeholder:text-[#4c4c4c]"
          )}
        />
      </div>
      <button className="flex w-[192px] items-center gap-2 bg-[#242424] pl-[18px] whitespace-nowrap">
        <Ban className="size-6 shrink-0 -scale-x-100" strokeWidth={2} />
        源码管理关闭
        <Svg className="mb-2 size-2.5 self-end" box="0 0 10 10">
          <path d="M10 0v10H0z" fill="#8a8a8a" />
        </Svg>
      </button>
    </footer>
  );
}

const apps: { name: string; active?: boolean; running?: boolean; icon: ReactNode }[] = [
  {
    name: "开始",
    icon: (
      <Svg className="size-6">
        <path d="m0 3 10-1.500V11H0zM11.500 1.300 24 0v11H11.500zM0 12.500h10V22L0 20.700zM11.500 12.500H24V24l-12.500-1.700z" fill="#fff" />
      </Svg>
    ),
  },
  {
    name: "任务视图",
    icon: (
      <Svg className="size-6">
        <path d="M1 0v4h15V0M1 24v-4h15v4M1 7h15v10H1zM22 0v5M22 11v13" stroke="#e4e4e8" strokeWidth="1.500" />
        <path d="M20 7h4v3h-4z" fill="#fff" />
      </Svg>
    ),
  },
  {
    name: "Edge",
    running: true,
    icon: (
      <Svg className="size-9" box="0 0 36 36">
        <defs>
          <linearGradient id="edge" x1="0" y1="0" x2="1" y2="0.5">
            <stop offset="0" stopColor="#1f9fe0" />
            <stop offset="0.6" stopColor="#33c5c0" />
            <stop offset="1" stopColor="#6fdc4f" />
          </linearGradient>
        </defs>
        <path d="M0 18C1 7 9 0 18 0c11 0 18 8 18 15 0 6-5 9-10 9-4 0-6-1-5-3 3-6-1-10-7-10C7 11 2 14 0 18z" fill="url(#edge)" />
        <path d="M0 18c2-5 7-7 12-7 3 0 5 1 6 2-5 1-8 6-7 11 1 6 6 10 12 11-2 1-4 1-6 1C7 36 0 27 0 18z" fill="#1279d6" />
        <path d="M18 13c-4 3-5 8-3 12 3 5 11 6 18 2-3 5-7 8-11 8-7-1-12-6-12-12 0-5 3-9 8-10z" fill="#0c4f9e" />
      </Svg>
    ),
  },
  {
    name: "文件资源管理器",
    running: true,
    icon: (
      <Svg className="h-[27px] w-8" box="0 0 32 27">
        <path d="M0 0h12l3 4h-3v6H0z" fill="#e8a317" />
        <path d="M0 4h11l3-2h17v24H0z" fill="#ffd564" />
        <path d="M6 27V16c0-1 1-2 2-2h16c1 0 2 1 2 2v11h-5v-6H11v6z" fill="#3a9be0" />
      </Svg>
    ),
  },
  {
    name: "Visual Studio Code",
    icon: (
      <Svg className="size-9" box="0 0 36 36">
        <path d="m27 0 9 4v28l-9 4z" fill="#2aa7f2" />
        <path d="m27 0-1 10L5 26l-4-4z" fill="#0b76c4" />
        <path d="m27 36-1-10L5 10l-4 4z" fill="#1a8fdc" />
      </Svg>
    ),
  },
  {
    name: "Quark",
    icon: (
      <Svg className="size-9" box="0 0 36 36">
        <circle cx="18" cy="18" r="18" fill="#5d6df0" />
        <circle cx="18" cy="18" r="15" fill="#8f7df5" opacity="0.6" />
        <path d="M23 26a10 10 0 1 1 5-8c0 4-3 5-5 3" stroke="#fff" strokeWidth="3.500" strokeLinecap="round" />
      </Svg>
    ),
  },
  {
    name: "Epic Games",
    icon: (
      <Svg className="h-9 w-[31px]" box="0 0 31 36">
        <path d="M2 0h27l2 2v26l-15.500 8L0 28V2z" fill="#0b0b0b" />
        <text x="15.500" y="17" textAnchor="middle" fontSize="12" fontWeight="700" fill="#fff" fontFamily="Roboto">
          EPIC
        </text>
        <text x="15.500" y="26" textAnchor="middle" fontSize="6" fontWeight="700" fill="#fff" fontFamily="Roboto">
          GAMES
        </text>
        <path d="M11 30h9l-4.500 2.500z" fill="#fff" />
      </Svg>
    ),
  },
  {
    name: "Unreal Editor",
    active: true,
    running: true,
    icon: (
      <Svg className="size-9" box="0 0 62 62">
        <circle cx="31" cy="31" r="29" fill="#000" stroke="#fff" strokeWidth="4" />
        <UnrealU fill="#fff" />
      </Svg>
    ),
  },
  {
    name: "Markdown Monster",
    running: true,
    icon: (
      <Svg className="size-9" box="0 0 36 36">
        <rect width="36" height="36" rx="3" fill="#050505" />
        <path d="M4 16V4l6 6 6-6v12M18 34V22l6 6 6-6v12" stroke="#1273cc" strokeWidth="4" />
        <path d="M25 2h5v8h3l-5.500 7-5.500-7h3zM6 20h5v7h3l-5.500 7L3 27h3z" fill="#f3efc8" />
      </Svg>
    ),
  },
  {
    name: "Notepad++",
    icon: (
      <Svg className="size-9" box="0 0 36 36">
        <path d="M3 3h24l-3 30H1z" fill="#eaf5e2" />
        <path d="M3 4h24" stroke="#9aa" strokeWidth="2" strokeDasharray="2 1.500" />
        <path d="M3 18c6-4 14-3 20 0l-1 14H2z" fill="#76c83a" />
        <path d="M5 17c3-2 5-1 7-4 2-4 8-4 9 0 1 5-4 5-8 6 4 1 7 3 6 6-4 3-9 1-8-3-3 0-5-2-6-5z" fill="#2f9d2c" stroke="#1c4d14" />
        <circle cx="17" cy="13" r="2" fill="#fff" stroke="#1c4d14" />
        <path d="m34 2-7 20-1 4" stroke="#e08a26" strokeWidth="2.500" />
      </Svg>
    ),
  },
  {
    name: "阅读器",
    icon: (
      <Svg className="h-[30px] w-9" box="0 0 36 30">
        <path d="M0 3h36v26H20l-2 1-2-1H0z" fill="#8a5a2b" />
        <path d="M2 1c6-2 12-1 16 2v24c-4-3-10-3-16-1zM34 1c-6-2-12-1-16 2v24c4-3 10-3 16-1z" fill="#efe9dc" />
        <path d="M18 3v24M5 6c4-1 7 0 10 1M5 11c4-1 7 0 10 1M5 16c4-1 7 0 10 1M21 7c3-1 6-2 10-1M21 12c3-1 6-2 10-1M21 17c3-1 6-2 10-1" stroke="#b8ad9b" />
      </Svg>
    ),
  },
];

function Taskbar() {
  return (
    <div className="relative flex h-[60px] shrink-0 bg-[linear-gradient(90deg,#2b2b38_0%,#222638_10%,#2a2935_16%,#36292f_21%,#2c2b38_30%,#2b2a38_50%,#302a36_62%,#2b2a38_78%,#352a33_84%,#1c2235_92%,#2c2832_100%)]">
      {apps.map((app) => (
        <button
          key={app.name}
          aria-label={app.name}
          className={clsx("flex w-[75px] flex-col items-center first:w-[72px]", app.active && "bg-[#5b5965]")}
        >
          <span className="flex h-[57px] items-center pt-[3px]">{app.icon}</span>
          {app.running && <span className={clsx("h-[3px] bg-[#62b5dc]", app.active ? "w-full" : "w-[61px]")} />}
        </button>
      ))}
      <div className="ml-auto flex items-center text-white">
        <Svg className="h-2.5 w-[18px]" box="0 0 18 10">
          <path d="m0 10 9-9 9 9" stroke="#fff" strokeWidth="1.500" />
        </Svg>
        <Svg className="ml-[15px] h-4 w-6" box="0 0 24 16">
          <path d="M7 4h15v11H6M24 7v5" stroke="#9a9aa2" strokeWidth="1.200" />
          <path d="M1 0v3M5 0v3M0 3h6v3c0 3-6 3-6 0zM3 9v6M9 5l8 8M17 5l-8 8" stroke="#fff" strokeWidth="1.300" />
        </Svg>
        <Svg className="ml-3 size-6">
          <circle cx="12" cy="12" r="11" stroke="#fff" strokeWidth="1.400" />
          <path d="M12 1c-7 7-7 15 0 22M12 1c4 4 6 8 5 12M2 8h20M2 16h12" stroke="#fff" strokeWidth="1.300" />
          <circle cx="18.500" cy="18.500" r="5" fill="#2a2733" stroke="#fff" strokeWidth="1.400" />
          <path d="m15 15 7 7" stroke="#fff" strokeWidth="1.300" />
        </Svg>
        <Svg className="ml-3 h-[18px] w-6" box="0 0 24 18">
          <path d="M1 6h3l6-5v16l-6-5H1z" stroke="#fff" strokeWidth="1.300" />
          <path d="M13 7v4M16 5c2 3 2 5 0 8M19 2c4 5 4 9 0 14" stroke="#fff" strokeWidth="1.300" />
        </Svg>
        <span className="ml-3 text-xl/6 font-bold">中</span>
        <div className="ml-[15px] w-[100px] text-center font-['Open_Sans'] text-lg/7">
          <div>17:16</div>
          <div>2022/4/23</div>
        </div>
        <Svg className="mr-[30px] ml-[26px] size-6">
          <path d="M1 3h22v17h-8l-3 3-3-3H1z" stroke="#fff" strokeWidth="1.500" />
        </Svg>
        <span className="mr-1.5 h-full w-0.5 bg-[#7b7984]" />
      </div>
      <p className="absolute right-4 bottom-1.5 font-['Liberation_Sans'] text-lg/6 text-white/60">CSDN @FULIYUAN8904</p>
    </div>
  );
}

export default function App() {
  return (
    <div className="relative flex h-screen flex-col overflow-hidden bg-[#151515] font-[Roboto,'Noto_Sans_CJK_SC',sans-serif] text-[#c0c0c0]">
      <TitleBar />
      <Toolbar />
      <div className="flex min-h-0 flex-1">
        <div className="ml-1.5 flex w-[285px] shrink-0 flex-col pt-1.5">
          <ComponentsPanel />
          <BlueprintPanel />
        </div>
        <GraphEditor />
        <DetailsPanel />
      </div>
      <StatusBar />
      <Taskbar />
      <ActionMenu />
    </div>
  );
}
